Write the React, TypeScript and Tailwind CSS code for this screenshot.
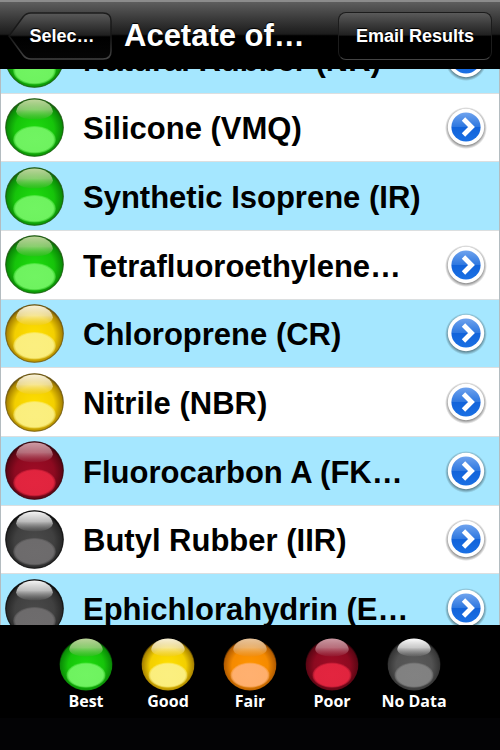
import React from "react";

type Tone = "best" | "good" | "fair" | "poor" | "none";

interface Palette {
  core: string;
  mid: string;
  edge: string;
  rim: string;
  glow: string;
  shine: string;
  shineEnd: string;
}

const palettes: Record<Tone, Palette> = {
  best: { core: "#1fdc10", mid: "#16c40a", edge: "#0a8a06", rim: "#1c5a10", glow: "#71f462", shine: "#bcd79a", shineEnd: "#3fb32c" },
  good: { core: "#ffe000", mid: "#f3cf00", edge: "#a98300", rim: "#6b5410", glow: "#fbef80", shine: "#fbf3d6", shineEnd: "#ecca2c" },
  fair: { core: "#ff9500", mid: "#f58a00", edge: "#b35c00", rim: "#6b3a08", glow: "#ffb070", shine: "#ecc79c", shineEnd: "#e88d20" },
  poor: { core: "#a00c26", mid: "#8d0a20", edge: "#5c0614", rim: "#35050e", glow: "#e3253f", shine: "#cf9aa4", shineEnd: "#93253a" },
  none: { core: "#4a4a4a", mid: "#404040", edge: "#282828", rim: "#0a0a0a", glow: "#6e6c6d", shine: "#f6f6f6", shineEnd: "#5c5c5c" },
};

// The key at the foot of the screen uses a lighter grey for missing data.
const legendNone: Palette = {
  ...palettes.none,
  core: "#5a5a5a",
  mid: "#525252",
  edge: "#363636",
  glow: "#828282",
  shine: "#ffffff",
  shineEnd: "#6c6c6c",
};

function Orb({ tone, id, legend = false }: { tone: Tone; id: string; legend?: boolean }) {
  const p = legend && tone === "none" ? legendNone : palettes[tone];
  return (
    <svg
      viewBox="0 0 58 58"
      className={legend ? "size-[54px] shrink-0" : "size-[59px] shrink-0"}
      aria-hidden="true"
    >
      <defs>
        <radialGradient id={`${id}-body`} cx="50%" cy="54%" r="52%">
          <stop offset="0" stopColor={p.core} />
          <stop offset="0.65" stopColor={p.mid} />
          <stop offset="0.93" stopColor={p.edge} />
          <stop offset="1" stopColor={legend ? "#000000" : p.rim} />
        </radialGradient>
        <linearGradient id={`${id}-shine`} x1="0" y1="0" x2="0" y2="1">
          <stop offset="0" stopColor={p.shine} />
          <stop offset="0.5" stopColor={p.shine} stopOpacity="0.7" />
          <stop offset="1" stopColor={p.shineEnd} stopOpacity="0.4" />
        </linearGradient>
        <radialGradient id={`${id}-glow`} cx="50%" cy="50%" r="50%">
          <stop offset="0" stopColor={p.glow} />
          <stop offset="0.88" stopColor={p.glow} stopOpacity="0.97" />
          <stop offset="1" stopColor={p.glow} stopOpacity="0.35" />
        </radialGradient>
      </defs>
      <circle cx="29" cy="29" r="28.5" fill={`url(#${id}-body)`} />
      {!legend && <circle cx="29" cy="29" r="28.3" fill="none" stroke={p.rim} strokeOpacity="0.75" />}
      <ellipse cx="29" cy="41" rx="21" ry="13.5" fill={`url(#${id}-glow)`} />
      <path
        d="M11 13C12 6 20 1.5 29 1.5S46 6 47 13C47 18 39 21 29 21S11 18 11 13Z"
        fill={`url(#${id}-shine)`}
      />
    </svg>
  );
}

function Disclosure() {
  return (
    <svg viewBox="0 0 44 44" className="block size-11" aria-hidden="true">
      <defs>
        <linearGradient id="disc-fill" x1="0" y1="0" x2="0" y2="1">
          <stop offset="0" stopColor="#6fa3ee" />
          <stop offset="0.49" stopColor="#2f78e0" />
          <stop offset="0.51" stopColor="#1263da" />
          <stop offset="1" stopColor="#1a70e4" />
        </linearGradient>
        <radialGradient id="disc-shadow" cx="50%" cy="50%" r="50%">
          <stop offset="0.8" stopColor="#000000" stopOpacity="0.5" />
          <stop offset="1" stopColor="#000000" stopOpacity="0" />
        </radialGradient>
      </defs>
      <circle cx="22" cy="23" r="21" fill="url(#disc-shadow)" />
      <circle cx="22" cy="22" r="18.2" fill="#ffffff" />
      <circle cx="22" cy="22" r="14.6" fill="url(#disc-fill)" />
      <path d="M19.5 14L27.5 22L19.5 30" fill="none" stroke="#ffffff" strokeWidth="4.8" />
    </svg>
  );
}

const materials: { name: string; tone: Tone; details: boolean }[] = [
  { name: "Natural Rubber (NR)", tone: "best", details: true },
  { name: "Silicone (VMQ)", tone: "best", details: true },
  { name: "Synthetic Isoprene (IR)", tone: "best", details: false },
  { name: "Tetrafluoroethylene…", tone: "best", details: true },
  { name: "Chloroprene (CR)", tone: "good", details: true },
  { name: "Nitrile (NBR)", tone: "good", details: true },
  { name: "Fluorocarbon A (FK…", tone: "poor", details: true },
  { name: "Butyl Rubber (IIR)", tone: "none", details: true },
  { name: "Ephichlorahydrin (E…", tone: "none", details: true },
];

const legend: { label: string; tone: Tone }[] = [
  { label: "Best", tone: "best" },
  { label: "Good", tone: "good" },
  { label: "Fair", tone: "fair" },
  { label: "Poor", tone: "poor" },
  { label: "No Data", tone: "none" },
];

function NavBar() {
  return (
    <header className="flex h-[69px] shrink-0 items-center border-t-2 border-[#8c8c8c] bg-linear-to-b from-[#5e5e5e] from-0% via-[#1c1c1c] via-48% to-black to-52% px-2 text-white">
      <button
        type="button"
        className="relative h-12 w-[104px] shrink-0 pl-1 text-center text-[18px] leading-6 font-bold [text-shadow:0_-1px_1px_#000]"
      >
        <svg viewBox="0 0 104 48" className="absolute inset-0 size-full" aria-hidden="true">
          <defs>
            <linearGradient id="back-fill" x1="0" y1="0" x2="0" y2="1">
              <stop offset="0" stopColor="#5a5a5a" />
              <stop offset="0.48" stopColor="#202020" />
              <stop offset="0.52" stopColor="#000000" />
              <stop offset="1" stopColor="#050505" />
            </linearGradient>
            <linearGradient id="back-line" x1="0" y1="0" x2="0" y2="1">
              <stop offset="0" stopColor="#1c1c1c" />
              <stop offset="0.5" stopColor="#161616" />
              <stop offset="1" stopColor="#444444" />
            </linearGradient>
          </defs>
          <path
            d="M1 24L15 5Q18 1 23 1H95Q103 1 103 9V39Q103 47 95 47H23Q18 47 15 43Z"
            fill="url(#back-fill)"
            stroke="url(#back-line)"
            strokeWidth="1.5"
          />
        </svg>
        <span className="relative">Selec…</span>
      </button>
      <h1 className="min-w-0 flex-1 truncate pl-3 text-[31px] leading-9 font-bold [text-shadow:0_-1px_1px_#000]">
        Acetate of…
      </h1>
      <button
        type="button"
        className="h-12 w-[154px] shrink-0 rounded-lg border border-t-[#1c1c1c] border-r-[#1c1c1c] border-b-[#444] border-l-[#1c1c1c] bg-linear-to-b from-[#5a5a5a] from-0% via-[#202020] via-48% to-black to-52% text-[18px] leading-6 font-bold whitespace-nowrap [text-shadow:0_-1px_1px_#000]"
      >
        Email Results
      </button>
    </header>
  );
}

export default function App() {
  return (
    <div className="flex h-screen flex-col overflow-hidden bg-black font-['Liberation_Sans',Arial,sans-serif]">
      <NavBar />
      <main className="min-h-0 flex-1 overflow-hidden border-x border-[#b4bcc0] bg-white">
        <ul className="-mt-11 grid h-[618px] auto-rows-fr">
          {materials.map((m, i) => (
            <li
              key={m.name}
              className="flex items-center border-b border-[#dcdfe0] pr-[11px] pl-1 odd:bg-[#a5e7ff] even:bg-white"
            >
              <Orb tone={m.tone} id={`row-${i}`} />
              <span className="min-w-0 flex-1 truncate pt-1 pl-[19px] text-[31px] leading-10 font-bold text-black">
                {m.name}
              </span>
              {m.details && (
                <button type="button" aria-label={`Details for ${m.name}`} className="shrink-0">
                  <Disclosure />
                </button>
              )}
            </li>
          ))}
        </ul>
      </main>
      <footer className="h-[125px] shrink-0 bg-[#030305]">
        <ul className="flex h-[93px] justify-center bg-black pt-3">
          {legend.map((l) => (
            <li key={l.label} className="flex w-[82px] flex-col items-center">
              <Orb tone={l.tone} id={`legend-${l.tone}`} legend />
              <span className="font-['Open_Sans','Noto_Sans',sans-serif] text-[16px] leading-5 font-bold whitespace-nowrap text-white">
                {l.label}
              </span>
            </li>
          ))}
        </ul>
      </footer>
    </div>
  );
}
